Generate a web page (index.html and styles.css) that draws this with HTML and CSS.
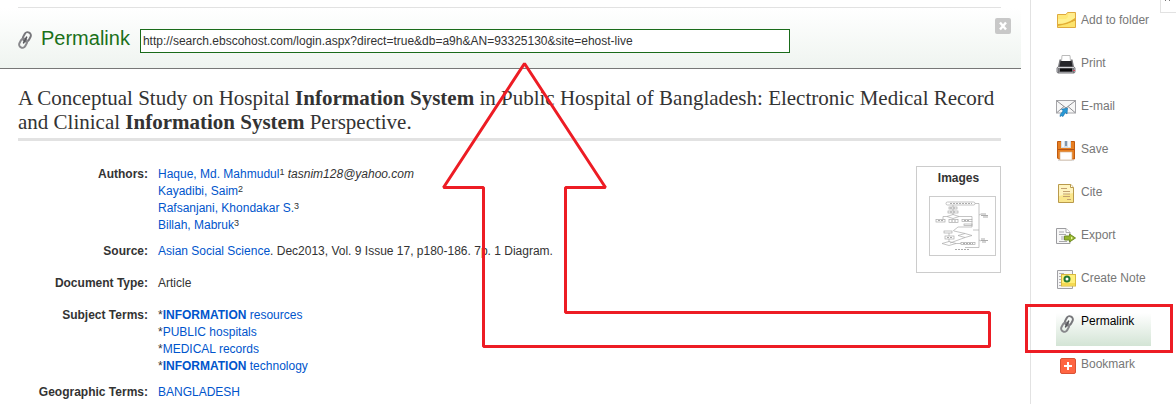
FILE: index.html
```html
<!DOCTYPE html>
<html lang="en">
<head>
    <meta charset="UTF-8">
    <title>Permalink</title>
    <link rel="stylesheet" href="styles.css">
</head>
<body>
    <svg class="symbols" width="0" height="0" aria-hidden="true">
        <symbol id="chain" viewBox="0 0 14 18">
            <g fill="none" stroke-linecap="round">
                <rect x="5.500" y="1" width="6.500" height="9.500" rx="3.200" transform="rotate(28 8.700 6)" stroke="#77777b" stroke-width="2"/>
                <rect x="2" y="7.500" width="6.500" height="9.500" rx="3.200" transform="rotate(28 5.300 12)" stroke="#88888c" stroke-width="2"/>
                <path d="M8.600 6.200 5.600 11.800" stroke="#55555a" stroke-width="1.600"/>
            </g>
        </symbol>
    </svg>

    <div class="page">
        <main class="main">
            <div class="topline"></div>

            <form class="permalink-bar">
                <svg class="chain" width="14" height="18" aria-hidden="true"><use href="#chain"/></svg>
                <label class="permalink-label" for="permalink">Permalink</label>
                <input class="permalink-input" type="text" id="permalink" value="http://search.ebscohost.com/login.aspx?direct=true&amp;db=a9h&amp;AN=93325130&amp;site=ehost-live" readonly>
                <button class="close" type="button" aria-label="Close">
                    <svg width="16" height="16" viewBox="0 0 16 16"><path d="M5 4.500l6 7M11 4.500l-6 7" stroke="#fff" stroke-width="2.400"/></svg>
                </button>
            </form>

            <article class="record">
                <h1 class="title">A Conceptual Study on Hospital <b>Information System</b> in Public Hospital of Bangladesh: Electronic Medical Record and Clinical <b>Information System</b> Perspective.</h1>

                <div class="details">
                    <dl class="fields">
                        <dt>Authors:</dt>
                        <dd class="multi">
                            <a href="#">Haque, Md. Mahmudul</a><sup>1</sup> <i>tasnim128@yahoo.com</i><br>
                            <a href="#">Kayadibi, Saim</a><sup>2</sup><br>
                            <a href="#">Rafsanjani, Khondakar S.</a><sup>3</sup><br>
                            <a href="#">Billah, Mabruk</a><sup>3</sup>
                        </dd>
                        <dt>Source:</dt>
                        <dd><a href="#">Asian Social Science</a>. Dec2013, Vol. 9 Issue 17, p180-186. 7p. 1 Diagram.</dd>
                        <dt>Document Type:</dt>
                        <dd>Article</dd>
                        <dt>Subject Terms:</dt>
                        <dd class="multi">
                            *<a href="#"><b>INFORMATION</b> resources</a><br>
                            *<a href="#">PUBLIC hospitals</a><br>
                            *<a href="#">MEDICAL records</a><br>
                            *<a href="#"><b>INFORMATION</b> technology</a>
                        </dd>
                        <dt>Geographic Terms:</dt>
                        <dd><a href="#">BANGLADESH</a></dd>
                    </dl>

                    <aside class="images">
                        <h2>Images</h2>
                        <a class="thumb" href="#" aria-label="Diagram">
                            <svg width="65" height="58" viewBox="0 0 65 58" fill="none" stroke="#aaa" stroke-width=".7">
                                <rect x="16" y="5" width="29" height="3" rx="1.500"/>
                                <rect x="19" y="10" width="8" height="2"/>
                                <rect x="18" y="14" width="10" height="2"/>
                                <path d="M23 8v2M23 12v2M23 16v2M17 19.500l6-2 6 2-6 2zM17 19.500h-4v3M29 19.500h13v3M23 21.500v1"/>
                                <rect x="6" y="22.500" width="9" height="2.500"/>
                                <rect x="19" y="22.500" width="9" height="3"/>
                                <rect x="32" y="22.500" width="10" height="2"/>
                                <rect x="34" y="27" width="8" height="1.500"/>
                                <path d="M45 6.500h4v44H35M49 18l2-1M49 33h-6M49 43l2 1M42 24v6H28l-5 4"/>
                                <path d="M51 17h5M51 18.500h7M53 20h5M51 42h4M51 43.500h7M52 45h4" stroke="#888"/>
                                <path d="M28 38.500l7-2 7 2-7 2zM24 34l11 2.500M35 40.500L20 46"/>
                                <rect x="14" y="34" width="8" height="2"/>
                                <rect x="15" y="39" width="9" height="3"/>
                                <path d="M19 36v3M19 42v3M12 46.500l7-2 7 2-7 2zM26 46.500h5"/>
                                <rect x="31" y="45.500" width="14" height="2"/>
                                <path d="M20 6.500h22M20 11h5M20 15h6M8 23.500h5M21 24h5M34 23.500h6M17 40.500h5M33 46.500h10M25 52.500h15" stroke="#888" stroke-dasharray="2 1"/>
                            </svg>
                        </a>
                    </aside>
                </div>
            </article>
        </main>

        <nav class="sidebar">
            <button class="collapse" type="button" aria-label="Collapse tools">
                <svg width="15" height="12" viewBox="0 0 15 12"><path d="M4.500 0v1M8.500 0v1" stroke="#777"/></svg>
            </button>
            <ul class="tools">
                <li><a href="#">
                    <svg width="20" height="20" viewBox="0 0 20 20">
                        <path d="M1.500 15.500v-13h8.500l1.500-2h8v15z" fill="#ffe878" stroke="#dfaa3e"/>
                        <path d="M12.500 2h6M12 4h7" stroke="#fff3a6"/>
                        <path d="M2 7h8l2-2h7v10H2z" fill="#fff08e"/>
                        <path d="M2 12q9 0 17-6v3Q11 13 2 15z" fill="#e2ad33"/>
                        <path d="M2 14q8-1 17-5v6H2z" fill="#fce36c"/>
                    </svg>Add to folder</a></li>
                <li><a href="#">
                    <svg width="20" height="20" viewBox="0 0 20 20">
                        <path d="M6 .5h8l.5 6h-9z" fill="#fff" stroke="#bbb"/>
                        <path d="M3.500 4.500H5V8h10V4.500h1.500l1.500 7 1.500 1.500v4l-1.500 1.500H2L.5 17v-4L2 11.500z" fill="#77777b"/>
                        <path d="M4.500 6h11l1 5.500h-13z" fill="#242428"/>
                        <path d="M2 12.500h16" stroke="#d4d4d8"/>
                        <path d="M4 13.500h12v3H4z" fill="#0b0b0d"/>
                        <path d="M1 13v4M19 13v4" stroke="#c4c4c8"/>
                        <path d="M3 17.500h14" stroke="#99999d"/>
                        <path d="M17 15.500h2" stroke="#d8455e"/>
                    </svg>Print</a></li>
                <li><a href="#">
                    <svg width="20" height="20" viewBox="0 0 20 20">
                        <rect x=".5" y="2.500" width="19" height="12.500" fill="#f7f7f7" stroke="#a4a4a8"/>
                        <path d="M1 3l9 7 9-7M1 14.500l7-6M19 14.500l-7-6" fill="none" stroke="#8f8f93"/>
                        <path d="M11.500 10l-.5 6-1.700-1.500-2.300 4-1.500-.8-1.500.8.3-2 2.900-3.700-1.700-1.500z" fill="#299ad6" stroke="#126aa6" stroke-width=".6"/>
                    </svg>E-mail</a></li>
                <li><a href="#">
                    <svg width="20" height="20" viewBox="0 0 20 20">
                        <path d="M2 19.500h16" stroke="#ddd"/>
                        <path d="M1.500 .5h17v17.500h-16l-1-1z" fill="#e77f20" stroke="#c05a10"/>
                        <path d="M5 0h10v7H5z" fill="#d3dce6"/>
                        <path d="M7 0v6M13 0v6" stroke="#fff" stroke-width="1.500"/>
                        <path d="M9 0h2v5H9z" fill="#8095aa"/>
                        <path d="M2 8.500h16" stroke="#b25315"/>
                        <path d="M4 11h12v8H4z" fill="#fff" stroke="#d5b899" stroke-width=".7"/>
                    </svg>Save</a></li>
                <li><a href="#">
                    <svg width="20" height="20" viewBox="0 0 20 20">
                        <path d="M2.500 .5H15l2.500 3v15h-15z" fill="#fff4c0" stroke="#b99a4b"/>
                        <path d="M3 12l14-3v9H3z" fill="#fae68c"/>
                        <path d="M14.500 .5v3h3" fill="#fff" stroke="#b99a4b"/>
                        <path d="M5 4.500h6M7 7.500h7M7 10h7M7 12.500h7M11 15.500h4" stroke="#c2a070"/>
                    </svg>Cite</a></li>
                <li><a href="#">
                    <svg width="20" height="20" viewBox="0 0 20 20">
                        <path d="M.5 1.500H10l4 4v11H.5z" fill="#f7f7f7" stroke="#9c9ca0"/>
                        <path d="M10 1.500v4h4" fill="#fff" stroke="#aaa"/>
                        <path d="M3 5h5M3 7.500h7M5 10h4M5 12h4M3 14.500h8" stroke="#a9a9ad"/>
                        <path d="M8.500 9h5V7l6 4-6 4v-2h-5z" fill="#94b52b" stroke="#718c29"/>
                        <path d="M15 9.500l2 1.500-2 1.500z" fill="#eef8a8"/>
                    </svg>Export</a></li>
                <li><a href="#">
                    <svg width="20" height="20" viewBox="0 0 20 20">
                        <path d="M1.500 .5h15v18h-15z" fill="#f6f6f6" stroke="#a0a0a4"/>
                        <path d="M3 3.500h5M3 6.500h3M3 9.500h3M3 12.500h3M3 15.500h9" stroke="#b3b3b7"/>
                        <rect x="5.500" y="4.500" width="14" height="11.500" fill="#fff07a" stroke="#d8b83e"/>
                        <path d="M6 13h13v2.500H6z" fill="#f5d953"/>
                        <circle cx="11" cy="9" r="2.500" fill="#fff" stroke="#267832" stroke-width="2"/>
                    </svg>Create Note</a></li>
                <li class="active"><a href="#">
                    <svg width="20" height="20" viewBox="0 0 20 20"><use href="#chain" x="4" y="2" width="14" height="18"/></svg>Permalink</a></li>
                <li><a href="#">
                    <svg width="20" height="20" viewBox="0 0 20 20">
                        <rect x="4.500" y="2.500" width="15" height="15" rx="1.500" fill="#ff6542" stroke="#da5135"/>
                        <path d="M12 6v8M8 10h8" stroke="#fff" stroke-width="2"/>
                    </svg>Bookmark</a></li>
            </ul>
        </nav>

        <!-- red arrow drawn over the record -->
        <svg class="arrow" width="1000" height="360" viewBox="0 0 1000 360" aria-hidden="true">
            <path d="M524.500 63.500 443.500 187.500h40v159h506v-34h-424v-125h40z" fill="none" stroke="#ed1c24" stroke-width="3" stroke-linejoin="bevel"/>
        </svg>
    </div>
</body>
</html>
```

FILE: styles.css
```css
* {
    box-sizing: border-box;
}
body {
    margin: 0;
    background: #fff;
    color: #333;
    font-family: Arial, "Liberation Sans", sans-serif;
    font-size: 12px;
    line-height: 17px;
}
a {
    color: #0055cc;
    text-decoration: none;
}
.symbols {
    position: absolute;
}
.page {
    position: relative;
    display: flex;
    min-height: 100vh;
    overflow: hidden;
}
.main {
    flex: 1;
    min-width: 0;
}
.topline {
    height: 8px;
    margin: 0 29px 0 18px;
    border-bottom: 1px solid #e2e2e2;
}

/* permalink bar */
.permalink-bar {
    position: relative;
    display: flex;
    align-items: baseline;
    margin-right: 9px;
    padding: 18px 40px 15px 18px;
    border-bottom: 1px solid #777;
    background: linear-gradient(#fff, #eff4f0);
}
.chain {
    align-self: center;
    margin-right: 9px;
}
.permalink-label {
    margin-right: 10px;
    color: #1a701a;
    font-size: 20px;
    line-height: 24px;
}
.permalink-input {
    flex: 1;
    max-width: 650px;
    height: 24px;
    padding: 0 2px;
    border: 1px solid #1a6b1a;
    background: #fff;
    color: #333;
    font: inherit;
}
.close {
    position: absolute;
    top: 10px;
    right: 10px;
    width: 16px;
    height: 16px;
    padding: 0;
    border: 0;
    border-radius: 2px;
    background: #c8c8c8;
}
.close svg {
    display: block;
}

/* record */
.record {
    margin: 0 29px 0 18px;
}
.title {
    margin: 0;
    padding: 17px 0 4px;
    border-bottom: 3px solid #e2e2e2;
    font-family: Georgia, "Liberation Serif", serif;
    font-size: 21px;
    font-weight: normal;
    line-height: 24px;
}
.details {
    display: flex;
    align-items: flex-start;
    padding-top: 25px;
}
.fields {
    flex: 1;
    display: grid;
    grid-template-columns: 130px 1fr;
    column-gap: 10px;
    margin: 0;
}
.fields dt {
    font-weight: bold;
    text-align: right;
}
.fields dd {
    margin: 0 0 15px;
}
.fields .multi {
    margin-bottom: 9px;
}
.fields sup {
    font-size: 9px;
    line-height: 0;
    vertical-align: 3px;
}
.images {
    width: 85px;
    padding: 3px 4px 16px 12px;
    border: 1px solid #ccc;
}
.images h2 {
    margin: 0 8px 9px 0;
    font-size: 12px;
    line-height: 17px;
    text-align: center;
}
.thumb {
    display: block;
    border: 1px solid #ccc;
}
.thumb svg {
    display: block;
}

/* tools */
.sidebar {
    position: relative;
    width: 146px;
    border-left: 1px solid #e2e2e2;
}
.tools {
    display: grid;
    gap: 10px;
    margin: 0;
    padding: 12px 25px;
    list-style: none;
}
.tools li {
    position: relative;
    height: 33px;
}
.tools a {
    display: flex;
    gap: 5px;
    color: #777;
    line-height: 16px;
    white-space: nowrap;
}
.tools .active {
    background: linear-gradient(#fff, #d3e4d5);
}
.tools .active a {
    color: #000;
}
.tools .active::after {
    content: "";
    position: absolute;
    inset: -9px -22px -7px -31px;
    border: 3px solid #ed1c24;
    pointer-events: none;
}
.collapse {
    position: absolute;
    top: 0;
    right: 0;
    padding: 0;
    border: solid #e2e2e2;
    border-width: 0 0 1px 1px;
    background: #fff;
}
.collapse svg {
    display: block;
}
.arrow {
    position: absolute;
    top: 0;
    left: 0;
    pointer-events: none;
}
```
